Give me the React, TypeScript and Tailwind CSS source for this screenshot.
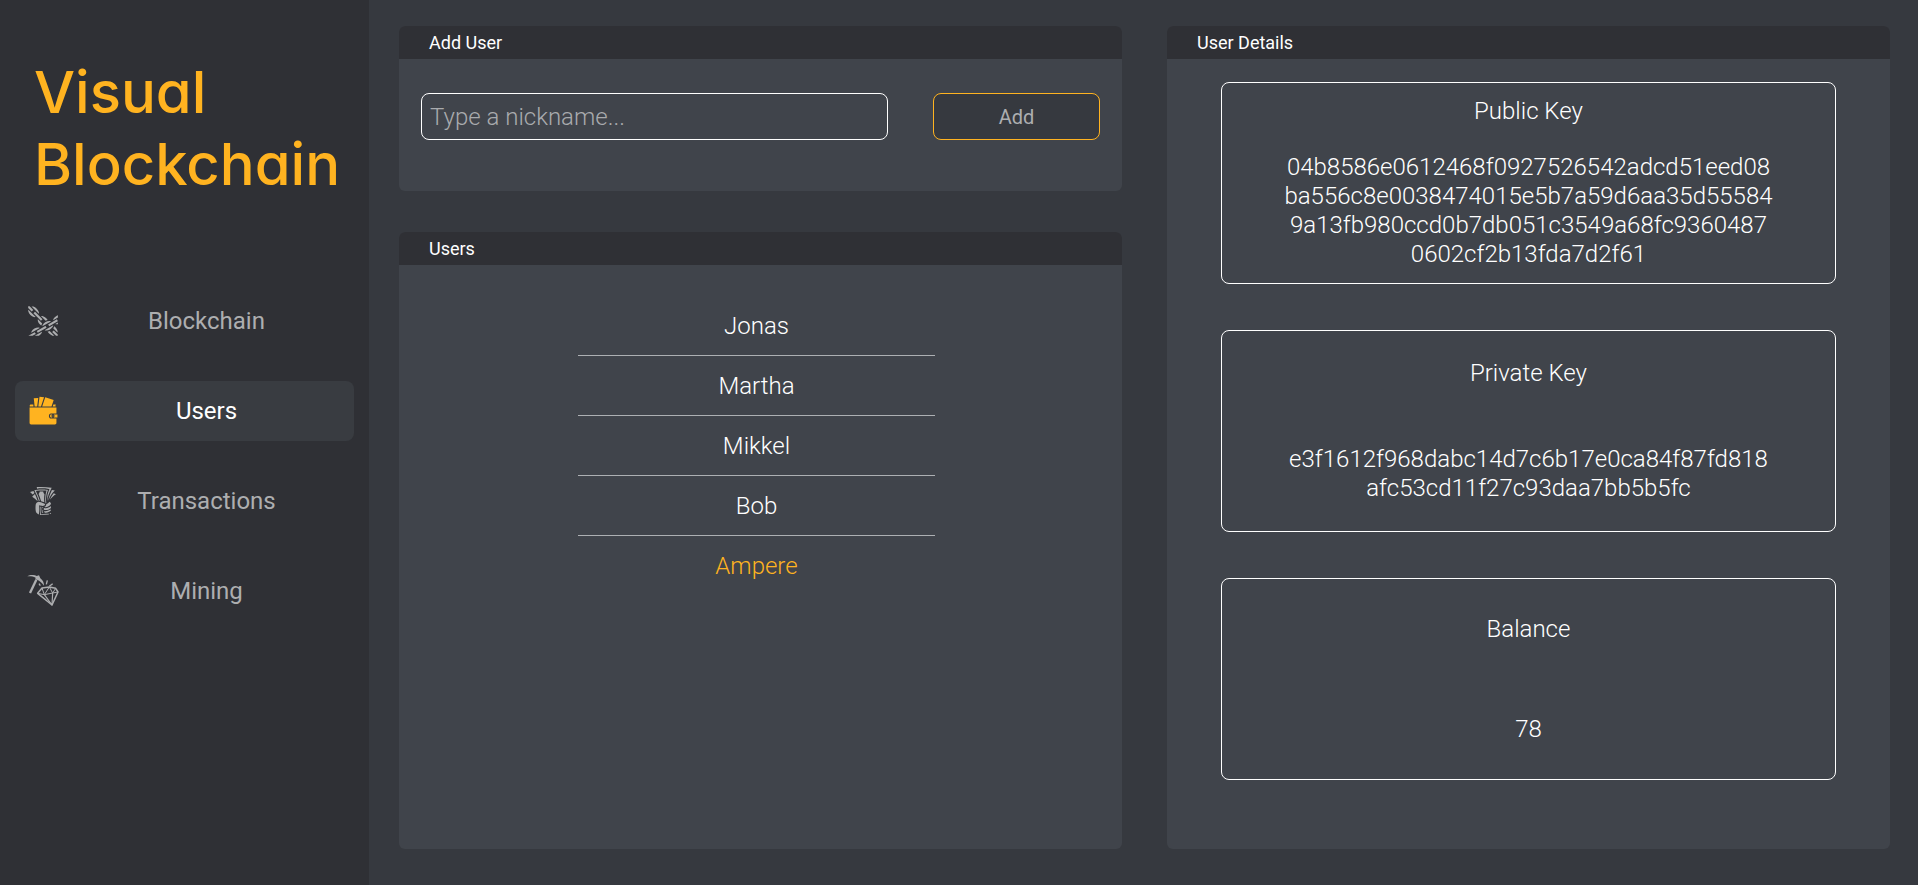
import { useState, type ReactNode } from "react";
import { GiCrossedChains, GiTakeMyMoney, GiWallet } from "react-icons/gi";

function PickaxeDiamond({ className }: { className?: string }) {
  return (
    <svg
      viewBox="24 30 96 96"
      className={className}
      fill="none"
      stroke="currentColor"
      strokeLinejoin="round"
      aria-hidden="true"
    >
      <path
        d="M25 34C33 28 44 29 53 33L60 31L64 40C71 45 75 52 75 62C69 54 63 49 56 45L49 43L50 38C42 34 34 33 25 34Z"
        fill="currentColor"
        stroke="none"
      />
      <path d="M52 44L33 84" strokeWidth="7" />
      <path d="M85 46L82 58M101 56L91 64M60 56L64 62" strokeWidth="4" />
      <path d="M56 85L69 69L91 66L110 70L117 81L99 120Z" strokeWidth="4.5" />
      <path d="M56 85L76 89L101 84L117 81M69 69L76 89L91 66L101 84L110 70" strokeWidth="3" />
      <path d="M76 89L99 120L101 84" strokeWidth="3.5" />
    </svg>
  );
}

const navItems = [
  { label: "Blockchain", icon: GiCrossedChains },
  { label: "Users", icon: GiWallet },
  { label: "Transactions", icon: GiTakeMyMoney },
  { label: "Mining", icon: PickaxeDiamond },
];

const users = ["Jonas", "Martha", "Mikkel", "Bob", "Ampere"];

const details = [
  {
    title: "Public Key",
    value:
      "04b8586e0612468f0927526542adcd51eed08ba556c8e0038474015e5b7a59d6aa35d555849a13fb980ccd0b7db051c3549a68fc93604870602cf2b13fda7d2f61",
  },
  {
    title: "Private Key",
    value: "e3f1612f968dabc14d7c6b17e0ca84f87fd818afc53cd11f27c93daa7bb5b5fc",
  },
  { title: "Balance", value: "78" },
];

function Panel({ title, className, children }: { title: string; className: string; children: ReactNode }) {
  return (
    <section className={`flex flex-col overflow-hidden rounded-md bg-[#40444b] ${className}`}>
      <h2 className="bg-[#2f3035] px-[30px] text-lg leading-[33px] font-normal">{title}</h2>
      {children}
    </section>
  );
}

function Sidebar() {
  return (
    <aside className="w-[369px] shrink-0 bg-[#2f3035] pt-14">
      <h1 className="pl-[34px] font-['Inter',sans-serif] text-[58px] leading-[72px] font-medium text-[#ffb320] [font-feature-settings:'cv11']">
        Visual
        <br />
        Blockchain
      </h1>
      <nav className="mt-[91px] flex flex-col gap-[30px] px-[15px]">
        {navItems.map(({ label, icon: Icon }) => {
          const active = label === "Users";
          return (
            <a
              key={label}
              href={`#${label.toLowerCase()}`}
              aria-current={active ? "page" : undefined}
              className={`flex h-[60px] items-center rounded-lg pl-3 text-2xl ${
                active ? "bg-[#393c41] text-white" : "text-[#adaeb0]"
              }`}
            >
              <Icon className={`size-8 ${active ? "text-[#ffb320]" : ""}`} />
              <span className="flex-1 text-center">{label}</span>
            </a>
          );
        })}
      </nav>
    </aside>
  );
}

export default function App() {
  const [selected, setSelected] = useState("Ampere");
  const [nickname, setNickname] = useState("");

  return (
    <div className="flex min-h-screen bg-[#36393f] font-['Roboto',sans-serif] text-white">
      <Sidebar />
      <main className="flex min-w-0 flex-1 gap-[45px] pt-[26px] pr-7 pb-9 pl-[30px]">
        <div className="flex min-w-0 flex-1 flex-col gap-[41px]">
          <Panel title="Add User" className="">
            <form
              onSubmit={(event) => event.preventDefault()}
              className="flex gap-[45px] px-[22px] pt-[34px] pb-[51px]"
            >
              <input
                type="text"
                aria-label="Nickname"
                placeholder="Type a nickname..."
                value={nickname}
                onChange={(event) => setNickname(event.target.value)}
                className="h-[47px] min-w-0 flex-1 rounded-lg border border-white px-2 text-2xl font-light outline-none placeholder:text-[#a9abae]"
              />
              <button
                type="submit"
                className="h-[47px] w-[167px] rounded-lg border border-[#ffb320] bg-[#36393f] text-xl text-[#adaeb0]"
              >
                Add
              </button>
            </form>
          </Panel>
          <Panel title="Users" className="flex-1">
            <ul className="mt-[31px] w-[357px] self-center divide-y divide-[#adb0b3] mr-2">
              {users.map((user) => (
                <li key={user}>
                  <button
                    type="button"
                    onClick={() => setSelected(user)}
                    className={`h-[59px] w-full text-2xl font-light ${user === selected ? "text-[#ffb320]" : ""}`}
                  >
                    {user}
                  </button>
                </li>
              ))}
            </ul>
          </Panel>
        </div>
        <Panel title="User Details" className="min-w-0 flex-1">
          <div className="flex flex-col items-center gap-[46px] py-[23px]">
            {details.map(({ title, value }) => (
              <article
                key={title}
                className="flex min-h-[202px] w-[85%] flex-col items-center justify-around rounded-lg border border-white text-center text-2xl leading-[29px] font-light"
              >
                <h3>{title}</h3>
                <p className="w-4/5 break-all">{value}</p>
              </article>
            ))}
          </div>
        </Panel>
      </main>
    </div>
  );
}
